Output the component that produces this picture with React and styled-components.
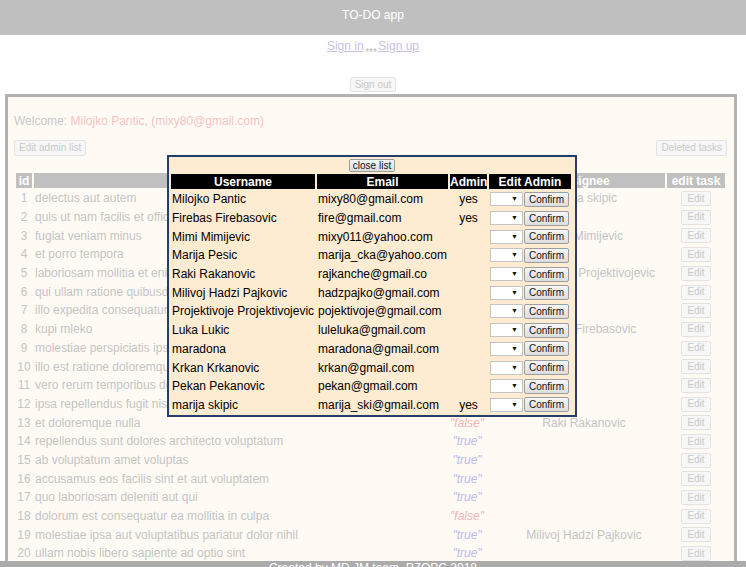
import React from "react";
import styled, { createGlobalStyle } from "styled-components";

const GlobalStyle = createGlobalStyle`
  body {
    margin: 0;
    background: #ffffff;
    font-family: "Liberation Sans", Arial, sans-serif;
    font-size: 12px;
  }
`;

const Page = styled.div`
  position: relative;
  min-height: 567px;
`;

const TopBar = styled.header`
  box-sizing: border-box;
  height: 35px;
  padding-top: 8px;
  background: #bfbfbf;
  color: #ffffff;
  text-align: center;
  line-height: 14px;
`;

const Nav = styled.div`
  height: 20px;
  margin-top: 4px;
  text-align: center;
  line-height: 14px;
`;

const NavLink = styled.a`
  color: #cbc0e2;
  text-decoration: underline;
  cursor: pointer;
`;

const Stars = styled.span`
  padding: 0 1.5px;
  font-size: 10px;
  color: #b8b8b8;
  vertical-align: -6px;
`;

const SignOutRow = styled.div`
  display: flex;
  justify-content: center;
  padding-top: 18px;
`;

const GhostButton = styled.button`
  box-sizing: border-box;
  height: ${(p) => p.$h || 15}px;
  padding: 0 ${(p) => p.$px || 4}px;
  font-family: inherit;
  font-size: 10px;
  line-height: 12px;
  color: #c9c9c9;
  background: #f7f7f7;
  border: 1px solid #e3e3e3;
  border-radius: 2px;
`;

const Board = styled.section`
  margin: 2px 9px 0 5px;
  padding: 17px 7px 40px 6px;
  background: #fffbf4;
  border: 3px solid #b2b2b2;
`;

const Welcome = styled.div`
  line-height: 14px;
  color: #c8c8c8;
`;

const Name = styled.span`
  color: #f5c3c3;
`;

const Toolbar = styled.div`
  display: flex;
  justify-content: space-between;
  margin-top: 12px;
`;

const TaskTable = styled.table`
  width: 713px;
  margin-top: 15px;
  table-layout: fixed;
  border-spacing: 2px;
`;

const HeadCell = styled.th`
  height: 15px;
  padding: 0 1px;
  background: #c0c0c0;
  color: #ffffff;
  font-weight: bold;
  font-size: 12px;
  line-height: 14px;
  text-align: center;
  overflow: hidden;
  white-space: nowrap;
`;

const Cell = styled.td`
  height: 16.7px;
  padding: 0 1px;
  color: #c4c4c4;
  line-height: 14px;
  vertical-align: middle;
  text-align: ${(p) => p.$align || "left"};
  white-space: nowrap;
  overflow: hidden;
`;

const Status = styled.span`
  font-style: italic;
  color: ${(p) => (p.$done ? "#b9b9ef" : "#f4b3b8")};
`;

const Modal = styled.div`
  position: absolute;
  left: 167px;
  top: 155px;
  width: 406px;
  background: #fdebd2;
  border: 2px solid #243d69;
`;

const ModalTop = styled.div`
  display: flex;
  justify-content: center;
  padding-top: 2px;
`;

const Button = styled.button`
  box-sizing: border-box;
  height: ${(p) => p.$h || 15}px;
  padding: 0 ${(p) => p.$px || 4}px;
  font-family: inherit;
  font-size: 10px;
  line-height: 11px;
  color: #111111;
  background: linear-gradient(#f6f6f6, #dddddd);
  border: 1px solid #9d9d9d;
  border-radius: 2px;
`;

const AdminTable = styled.table`
  width: 404px;
  table-layout: fixed;
  border-spacing: 2px;
`;

const BlackHead = styled.th`
  height: 15px;
  padding: 0;
  background: #000000;
  color: #ffffff;
  font-weight: bold;
  font-size: 12px;
  line-height: 14px;
  text-align: center;
  white-space: nowrap;
`;

const UserCell = styled.td`
  height: 16.7px;
  padding: 0 1px;
  color: #000000;
  line-height: 14px;
  vertical-align: middle;
  white-space: nowrap;
  text-align: ${(p) => p.$align || "left"};
`;

const EditAdmin = styled.div`
  display: flex;
  align-items: center;
  gap: 1px;
`;

const SelectBox = styled.div`
  box-sizing: border-box;
  display: flex;
  align-items: center;
  justify-content: flex-end;
  width: 33px;
  height: 14px;
  padding-right: 4px;
  background: #ffffff;
  border: 1px solid #c4c4c4;
  font-size: 7px;
  color: #111111;
`;

const Footer = styled.footer`
  position: fixed;
  left: 0;
  right: 0;
  bottom: 0;
  height: 6px;
  overflow: hidden;
  background: #ababab;
  color: #ffffff;
  text-align: center;
  line-height: 14px;
`;

const tasks = [
  ["delectus aut autem", false, "marija skipic"],
  ["quis ut nam facilis et officia qui", false, ""],
  ["fugiat veniam minus", false, "Mimi Mimijevic"],
  ["et porro tempora", true, ""],
  ["laboriosam mollitia et enim quasi adipisci quia provident illum", false, "Projektivoje Projektivojevic"],
  ["qui ullam ratione quibusdam voluptatem quia omnis", false, ""],
  ["illo expedita consequatur quia in", false, ""],
  ["kupi mleko", true, "Firebas Firebasovic"],
  ["molestiae perspiciatis ipsa", false, ""],
  ["illo est ratione doloremque quia maiores aut", true, ""],
  ["vero rerum temporibus dolor", true, ""],
  ["ipsa repellendus fugit nisi", true, ""],
  ["et doloremque nulla", false, "Raki Rakanovic"],
  ["repellendus sunt dolores architecto voluptatum", true, ""],
  ["ab voluptatum amet voluptas", true, ""],
  ["accusamus eos facilis sint et aut voluptatem", true, ""],
  ["quo laboriosam deleniti aut qui", true, ""],
  ["dolorum est consequatur ea mollitia in culpa", false, ""],
  ["molestiae ipsa aut voluptatibus pariatur dolor nihil", true, "Milivoj Hadzi Pajkovic"],
  ["ullam nobis libero sapiente ad optio sint", true, ""],
];

const users = [
  ["Milojko Pantic", "mixy80@gmail.com", true],
  ["Firebas Firebasovic", "fire@gmail.com", true],
  ["Mimi Mimijevic", "mixy011@yahoo.com", false],
  ["Marija Pesic", "marija_cka@yahoo.com", false],
  ["Raki Rakanovic", "rajkanche@gmail.co", false],
  ["Milivoj Hadzi Pajkovic", "hadzpajko@gmail.com", false],
  ["Projektivoje Projektivojevic", "pojektivoje@gmail.com", false],
  ["Luka Lukic", "luleluka@gmail.com", false],
  ["maradona", "maradona@gmail.com", false],
  ["Krkan Krkanovic", "krkan@gmail.com", false],
  ["Pekan Pekanovic", "pekan@gmail.com", false],
  ["marija skipic", "marija_ski@gmail.com", true],
];

const App = () => {
  return (
    <Page>
      <GlobalStyle />
      <TopBar>TO-DO app</TopBar>
      <Nav>
        <NavLink>Sign in</NavLink>
        <Stars>***</Stars>
        <NavLink>Sign up</NavLink>
      </Nav>
      <SignOutRow>
        <GhostButton>Sign out</GhostButton>
      </SignOutRow>

      <Board>
        <Welcome>
          Welcome: <Name>Milojko Pantic, (mixy80@gmail.com)</Name>
        </Welcome>
        <Toolbar>
          <GhostButton $h={16}>Edit admin list</GhostButton>
          <GhostButton $h={16}>Deleted tasks</GhostButton>
        </Toolbar>
        <TaskTable>
          <colgroup>
            <col style={{ width: 16 }} />
            <col style={{ width: 397 }} />
            <col style={{ width: 68 }} />
            <col style={{ width: 162 }} />
            <col style={{ width: 58 }} />
          </colgroup>
          <thead>
            <tr>
              <HeadCell>id</HeadCell>
              <HeadCell>title</HeadCell>
              <HeadCell>completed</HeadCell>
              <HeadCell>assignee</HeadCell>
              <HeadCell>edit task</HeadCell>
            </tr>
          </thead>
          <tbody>
            {tasks.map(([title, done, who], i) => (
              <tr key={i}>
                <Cell $align="center">{i + 1}</Cell>
                <Cell>{title}</Cell>
                <Cell $align="center">
                  <Status $done={done}>"{done ? "true" : "false"}"</Status>
                </Cell>
                <Cell $align="center">{who}</Cell>
                <Cell $align="center">
                  <GhostButton $px={5}>Edit</GhostButton>
                </Cell>
              </tr>
            ))}
          </tbody>
        </TaskTable>
      </Board>

      <Modal>
        <ModalTop>
          <Button $h={13} $px={3}>close list</Button>
        </ModalTop>
        <AdminTable>
          <colgroup>
            <col style={{ width: 144 }} />
            <col style={{ width: 131 }} />
            <col style={{ width: 37 }} />
            <col style={{ width: 82 }} />
          </colgroup>
          <thead>
            <tr>
              <BlackHead>Username</BlackHead>
              <BlackHead>Email</BlackHead>
              <BlackHead>Admin</BlackHead>
              <BlackHead>Edit Admin</BlackHead>
            </tr>
          </thead>
          <tbody>
            {users.map(([name, email, admin]) => (
              <tr key={email}>
                <UserCell>{name}</UserCell>
                <UserCell>{email}</UserCell>
                <UserCell $align="center">{admin ? "yes" : ""}</UserCell>
                <UserCell>
                  <EditAdmin>
                    <SelectBox>▼</SelectBox>
                    <Button>Confirm</Button>
                  </EditAdmin>
                </UserCell>
              </tr>
            ))}
          </tbody>
        </AdminTable>
      </Modal>

      <Footer>Created by MD JM team, PZOPC 2018</Footer>
    </Page>
  );
};

export default App;
